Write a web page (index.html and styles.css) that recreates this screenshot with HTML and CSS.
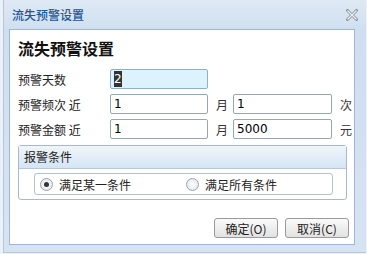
FILE: index.html
```html
<!DOCTYPE html>
<html lang="zh-CN">
<head>
    <meta charset="UTF-8">
    <title>流失预警设置</title>
    <link rel="stylesheet" href="styles.css">
</head>
<body>

<div class="window">
    <div class="titlebar">
        <span class="title">流失预警设置</span>
        <svg class="close" width="12" height="12" viewBox="0 0 12 12">
            <path d="M1.5 1.5 L10.5 10.5 M10.5 1.5 L1.5 10.5" stroke="#8a949e" stroke-width="3" stroke-linecap="square"/>
            <path d="M1.5 1.5 L10.5 10.5 M10.5 1.5 L1.5 10.5" stroke="#eef2f6" stroke-width="1.2"/>
        </svg>
    </div>

    <div class="panel">
        <h2>流失预警设置</h2>

        <div class="row">
            <span class="label">预警天数</span>
            <div class="field focus"><span class="sel">2</span></div>
        </div>
        <div class="row">
            <span class="label">预警频次 近</span>
            <div class="field">1</div>
            <span class="unit">月</span>
            <div class="field wide">1</div>
            <span class="unit">次</span>
        </div>
        <div class="row">
            <span class="label">预警金额 近</span>
            <div class="field">1</div>
            <span class="unit">月</span>
            <div class="field wide">5000</div>
            <span class="unit">元</span>
        </div>

        <div class="group">
            <div class="group-head">报警条件</div>
            <div class="group-body">
                <div class="radios">
                    <label class="radio checked"><i></i>满足某一条件</label>
                    <label class="radio"><i></i>满足所有条件</label>
                </div>
            </div>
        </div>

        <div class="buttons">
            <button>确定(O)</button>
            <button>取消(C)</button>
        </div>
    </div>
</div>

</body>
</html>
```

FILE: styles.css
```css
body {
    margin: 0;
    font-family: "Noto Sans CJK SC", "DejaVu Sans", sans-serif;
    font-size: 12px;
    color: #222;
    background-color: #eaf1f9;
}
.window {
    width: 363px;
    height: 253px;
    margin-left: 3px;
    border-left: 1px solid #b9c6d4;
    border-bottom: 1px solid #b9c6d4;
    background: linear-gradient(#dfe9f5, #cfdff0 30px, #d6e3f2);
    box-sizing: border-box;
}
.titlebar {
    height: 29px;
    display: flex;
    align-items: center;
    justify-content: space-between;
    padding: 0 8px 1px 8px;
    box-sizing: border-box;
}
.title {
    color: #22589a;
    font-size: 12px;
    font-weight: 500;
}
.close {
    margin-top: 2px;
}
.panel {
    margin-left: 5px;
    width: 346px;
    height: 216px;
    background-color: #fff;
    border: 1px solid #9fb7d3;
    box-sizing: border-box;
    padding: 0 0 0 8px;
}
h2 {
    margin: 8px 0 11px 0;
    font-size: 16px;
    line-height: 20px;
    color: #111;
}
.row {
    display: flex;
    align-items: center;
    height: 20px;
    margin-bottom: 5px;
}
.row > * {
    flex-shrink: 0;
}
.label {
    width: 92px;
    white-space: pre;
}
.field {
    width: 98px;
    height: 20px;
    box-sizing: border-box;
    border: 1px solid #94a7b7;
    border-radius: 2px;
    background-color: #fff;
    font-family: "DejaVu Sans", sans-serif;
    font-size: 12px;
    line-height: 18px;
    padding-left: 3px;
    color: #000;
}
.field.wide {
    width: 99px;
}
.field.focus {
    background-color: #dcf3fd;
    border-color: #8fb0c9;
}
.sel {
    background-color: #333;
    color: #fff;
    padding: 1px 0;
}
.unit {
    width: 12px;
    margin: 0 5px 0 8px;
    color: #333;
}
.unit:last-child {
    margin-right: 0;
}
.group {
    margin-top: 6px;
    width: 329px;
    border: 1px solid #a7b9d0;
    border-radius: 3px;
    box-sizing: border-box;
    padding-bottom: 4px;
}
.group-head {
    height: 22px;
    line-height: 21px;
    padding-left: 5px;
    background: linear-gradient(#f0f5fb, #d5e4f4);
    border-bottom: 1px solid #b7c8dc;
    color: #222;
}
.group-body {
    padding: 4px 0 0 15px;
}
.radios {
    width: 299px;
    height: 22px;
    border: 1px solid #b7c0cb;
    border-radius: 3px;
    box-sizing: border-box;
    display: flex;
    align-items: center;
    padding-left: 5px;
}
.radio {
    display: flex;
    align-items: center;
    width: 147px;
}
.radio i {
    width: 11px;
    height: 11px;
    border: 1px solid #9aa3ad;
    border-radius: 50%;
    background: radial-gradient(#fff, #dde2e8);
    margin-right: 6px;
    position: relative;
}
.radio.checked i::after {
    content: "";
    position: absolute;
    left: 3px;
    top: 3px;
    width: 5px;
    height: 5px;
    border-radius: 50%;
    background-color: #333;
}
.buttons {
    display: flex;
    justify-content: flex-end;
    gap: 7px;
    margin-top: 18px;
    margin-right: 5px;
}
button {
    width: 64px;
    height: 20px;
    padding: 0;
    font-family: "Noto Sans CJK SC", "DejaVu Sans", sans-serif;
    font-size: 12px;
    color: #222;
    border: 1px solid #9a9a9a;
    border-radius: 3px;
    background: linear-gradient(#fafafa, #e2e2e2);
}
```
